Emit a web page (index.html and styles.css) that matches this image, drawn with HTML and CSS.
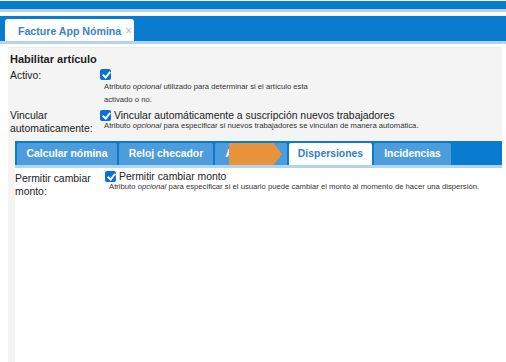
FILE: index.html
```html
<!DOCTYPE html>
<html lang="es">
<head>
<meta charset="utf-8">
<link rel="stylesheet" href="styles.css">
</head>
<body>
<div class="topbar"></div>
<div class="doc-tabs">
  <div class="doc-tab">Facture App Nómina <span class="close">×</span></div>
</div>
<div class="panel">
  <div class="section-title">Habilitar artículo</div>
  <div class="row">
    <div class="label">Activo:</div>
    <div class="field">
      <div class="check-line first"><span class="cb"></span></div>
      <div class="desc two">Atributo <i>opcional</i> utilizado para determinar si el artículo esta<br>activado o no.</div>
    </div>
  </div>
  <div class="row">
    <div class="label">Vincular<br>automaticamente:</div>
    <div class="field">
      <div class="check-line"><span class="cb"></span><span>Vincular automáticamente a suscripción nuevos trabajadores</span></div>
      <div class="desc">Atributo <i>opcional</i> para especificar si nuevos trabajadores se vinculan de manera automática.</div>
    </div>
  </div>
  <div class="inner">
    <div class="inner-tabs">
      <div class="itab w1">Calcular nómina</div>
      <div class="itab w2">Reloj checador</div>
      <div class="itab w3">Aguinaldo</div>
      <div class="itab w4 active">Dispersiones</div>
      <div class="itab w5">Incidencias</div>
      <div class="arrow"></div>
    </div>
    <div class="inner-body">
      <div class="row row2">
        <div class="label">Permitir cambiar<br>monto:</div>
        <div class="field">
          <div class="check-line"><span class="cb"></span><span>Permitir cambiar monto</span></div>
          <div class="desc">Atributo <i>opcional</i> para especificar si el usuario puede cambiar el monto al momento de hacer una dispersión.</div>
        </div>
      </div>
    </div>
  </div>
</div>
</body>
</html>
```
FILE: styles.css
```css
html, body {
  margin: 0;
  padding: 0;
  background: #ffffff;
  font-family: "Liberation Sans", Arial, sans-serif;
  color: #222;
}
body {
  height: 362px;
  overflow: hidden;
  display: flex;
  flex-direction: column;
}
.topbar {
  margin-top: 1px;
  height: 8px;
  background: #0a7ccf;
  border-bottom: 3px solid #b2d5ef;
}
.doc-tabs {
  margin-top: 4px;
  height: 22px;
  padding: 3px 0 0 5px;
  background: #0a7ccf;
  border-bottom: 3px solid #b2d5ef;
  display: flex;
}
.doc-tab {
  background: #fff;
  width: 129px;
  box-sizing: border-box;
  padding: 5px 0 0 13px;
  font-size: 10.6px;
  font-weight: bold;
  color: #3d82c6;
  border-radius: 3px 3px 0 0;
  white-space: nowrap;
}
.doc-tab .close {
  color: #a9bfd6;
  font-weight: normal;
  font-size: 12px;
  margin-left: 1px;
}
.panel {
  margin: 3px 4px 0 8px;
  flex: 1;
  background: #f4f4f4;
  border-top: 1px solid #ececec;
  padding: 4px 0 0 2px;
  display: flex;
  flex-direction: column;
}
.section-title {
  font-size: 11px;
  font-weight: bold;
  color: #1e1e1e;
  line-height: 15px;
  margin-bottom: 2px;
}
.row {
  display: grid;
  grid-template-columns: 90px 1fr;
  margin-bottom: 3px;
}
.label {
  font-size: 10.4px;
  line-height: 13px;
  color: #222;
}
.check-line {
  display: flex;
  align-items: center;
  gap: 3px;
  font-size: 10.4px;
  line-height: 13px;
  height: 13px;
  white-space: nowrap;
}
.check-line.first {
  height: 11px;
  align-items: flex-start;
}
.cb {
  width: 11px;
  height: 11px;
  border-radius: 2px;
  background: #0a6fd6;
  position: relative;
  flex: none;
}
.cb::after {
  content: "";
  position: absolute;
  left: 3.5px;
  top: 1px;
  width: 3px;
  height: 6px;
  border: solid #fff;
  border-width: 0 2px 2px 0;
  transform: rotate(40deg);
}
.desc {
  font-size: 7.7px;
  line-height: 8px;
  color: #333;
  padding-left: 4px;
  white-space: nowrap;
}
.desc.two {
  line-height: 13px;
}
.inner {
  margin-left: 5px;
  margin-top: 3px;
  flex: 1;
  background: #fff;
  display: flex;
  flex-direction: column;
}
.inner-tabs {
  position: relative;
  height: 22px;
  padding: 2px 0 0 2px;
  background: #0a7ccf;
  border-bottom: 3px solid #b2d5ef;
  display: flex;
  gap: 2px;
}
.itab {
  background: #4d9cdb;
  color: #fff;
  font-size: 10.4px;
  font-weight: bold;
  line-height: 22px;
  text-align: center;
  border-radius: 2px 2px 0 0;
  white-space: nowrap;
}
.w1 { width: 100px; }
.w2 { width: 94px; }
.w3 { width: 72px; }
.w4 { width: 83px; }
.w5 { width: 77px; }
.itab.active {
  background: #fff;
  color: #2f7fcc;
}
.arrow {
  position: absolute;
  left: 214px;
  top: 2px;
  width: 53px;
  height: 22px;
  background: #e8923a;
  clip-path: polygon(0 0, 84% 0, 100% 50%, 84% 100%, 0 100%);
}
.inner-body {
  padding: 2px 0 0 0;
}
.row2 .label {
  padding-top: 2px;
}
```
